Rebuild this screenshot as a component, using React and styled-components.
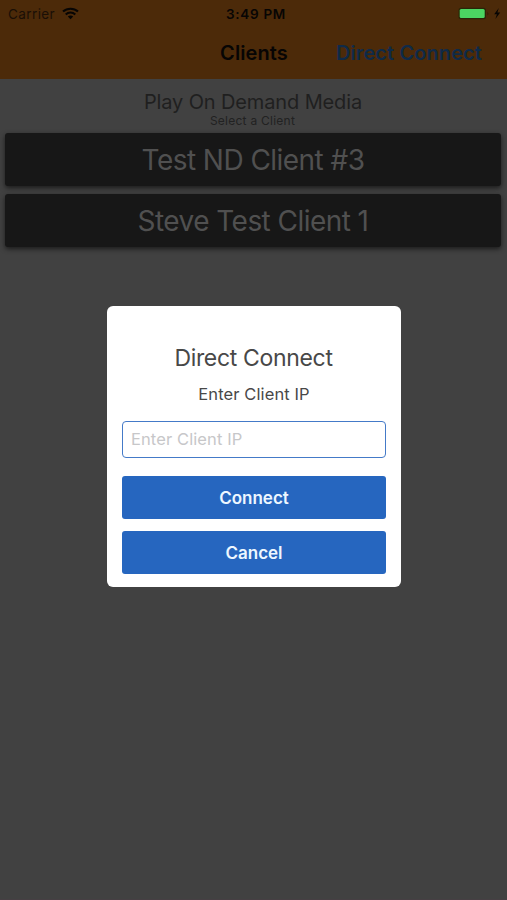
import React from "react";
import styled, { createGlobalStyle } from "styled-components";

const GlobalStyle = createGlobalStyle`
  * {
    box-sizing: border-box;
  }
  body {
    margin: 0;
    background-color: #414141;
    font-family: Inter, "Liberation Sans", sans-serif;
  }
`;

const Screen = styled.div`
  position: relative;
  width: 507px;
  height: 900px;
  overflow: hidden;
  background-color: #414141;
  border-bottom: 1px solid #463f43;
`;

const Header = styled.header`
  height: 79px;
  background-color: #4c2a09;
  color: #070504;
`;

const StatusBar = styled.div`
  display: grid;
  grid-template-columns: 1fr auto 1fr;
  align-items: center;
  height: 27px;
  padding: 0 6px 0 8px;
`;

const StatusGroup = styled.div`
  display: flex;
  align-items: center;
  justify-content: ${(props) => (props.$end ? "flex-end" : "flex-start")};
  gap: 7px;
`;

const Carrier = styled.span`
  color: #1a0f06;
  font-size: 13.5px;
  letter-spacing: 0.4px;
`;

const Time = styled.span`
  padding-left: 3px;
  font-size: 13.5px;
  font-weight: 600;
  letter-spacing: 0.7px;
`;

const NavBar = styled.nav`
  display: grid;
  grid-template-columns: 1fr auto 1fr;
  align-items: center;
  height: 51px;
  padding-right: 25px;
  padding-left: 26px;
`;

const NavTitle = styled.h1`
  grid-column: 2;
  margin: 0;
  font-size: 20px;
  font-weight: 600;
  letter-spacing: 0.1px;
`;

const NavLink = styled.a`
  justify-self: end;
  color: #0f2a48;
  font-size: 20px;
  font-weight: 600;
  letter-spacing: 0.1px;
  white-space: nowrap;
`;

const Intro = styled.div`
  height: 54px;
  padding-top: 11px;
  text-align: center;
`;

const IntroTitle = styled.h2`
  margin: 0 1px 0 0;
  color: #1f1f1f;
  font-size: 20px;
  font-weight: 400;
  line-height: 24px;
  letter-spacing: -0.13px;
`;

const IntroText = styled.p`
  margin: 0 2px 0 0;
  color: #222222;
  font-size: 12px;
  line-height: 14px;
  letter-spacing: 0.25px;
`;

const ClientList = styled.div`
  display: flex;
  flex-direction: column;
  gap: 8px;
  padding: 0 6px 0 5px;
`;

const Client = styled.div`
  height: 53px;
  border-radius: 3px;
  background-color: #171717;
  box-shadow: 0 2px 5px rgba(0, 0, 0, 0.6);
  color: #505050;
  font-size: 28px;
  font-weight: 400;
  line-height: 55px;
  text-align: center;
  letter-spacing: -0.55px;
`;

const Dialog = styled.div`
  position: absolute;
  top: 306px;
  left: 107px;
  width: 294px;
  height: 281px;
  padding: 38px 15px 0;
  border-radius: 6px;
  background-color: #ffffff;
  text-align: center;
`;

const DialogTitle = styled.h3`
  margin: 0 1px 0 0;
  color: #484848;
  font-size: 23px;
  font-weight: 400;
  line-height: 28px;
  letter-spacing: -0.33px;
`;

const DialogText = styled.p`
  margin: 12px 0 17px;
  color: #484848;
  font-size: 16.5px;
  line-height: 20px;
  letter-spacing: 0.1px;
`;

const Field = styled.input`
  display: block;
  width: 100%;
  height: 37px;
  margin-bottom: 18px;
  padding: 0 8px 1px;
  border: 1px solid #447ac8;
  border-radius: 4px;
  outline: none;
  background-color: #ffffff;
  font-family: inherit;
  font-size: 16.5px;
  letter-spacing: 0.1px;
  &::placeholder {
    color: #c7c7c9;
    opacity: 1;
  }
`;

const Button = styled.button`
  display: block;
  width: 100%;
  height: 43px;
  margin-bottom: 12px;
  padding: 0;
  border: none;
  border-radius: 3px;
  background-color: #2666bf;
  color: #edf7ff;
  font-family: inherit;
  font-size: 17px;
  font-weight: 600;
`;

const WifiIcon = () => (
  <svg width="17" height="13" viewBox="0 0 17 13" fill="none">
    <path
      d="M1 4.6C5.2.7 11.8.7 16 4.6M3.7 7.4c2.7-2.5 6.9-2.5 9.6 0"
      stroke="#070504"
      strokeWidth="2.1"
    />
    <path d="M5.8 9.5c1.5-1.4 3.9-1.4 5.4 0L8.5 12.3z" fill="#070504" />
  </svg>
);

const BatteryIcon = () => (
  <svg width="43" height="13" viewBox="0 0 43 13">
    <rect x="0.5" y="0.8" width="27.5" height="11.4" rx="2.5" fill="#2a2608" />
    <rect x="1.7" y="2" width="25" height="9" rx="1.5" fill="#4bd662" />
    <path d="M29.5 4.5q1.5 2 0 4z" fill="#2a1806" />
    <path d="M40.8.9 36.2 7.2h2.7l-1.5 4.8 4.8-6.4h-2.8z" fill="#070504" />
  </svg>
);

const clients = ["Test ND Client #3", "Steve Test Client 1"];

const App = () => (
  <>
    <GlobalStyle />
    <Screen>
      <Header>
        <StatusBar>
          <StatusGroup>
            <Carrier>Carrier</Carrier>
            <WifiIcon />
          </StatusGroup>
          <Time>3:49 PM</Time>
          <StatusGroup $end>
            <BatteryIcon />
          </StatusGroup>
        </StatusBar>
        <NavBar>
          <NavTitle>Clients</NavTitle>
          <NavLink>Direct Connect</NavLink>
        </NavBar>
      </Header>
      <Intro>
        <IntroTitle>Play On Demand Media</IntroTitle>
        <IntroText>Select a Client</IntroText>
      </Intro>
      <ClientList>
        {clients.map((client) => (
          <Client key={client}>{client}</Client>
        ))}
      </ClientList>
      <Dialog role="dialog">
        <DialogTitle>Direct Connect</DialogTitle>
        <DialogText>Enter Client IP</DialogText>
        <Field placeholder="Enter Client IP" />
        <Button>Connect</Button>
        <Button>Cancel</Button>
      </Dialog>
    </Screen>
  </>
);

export default App;
